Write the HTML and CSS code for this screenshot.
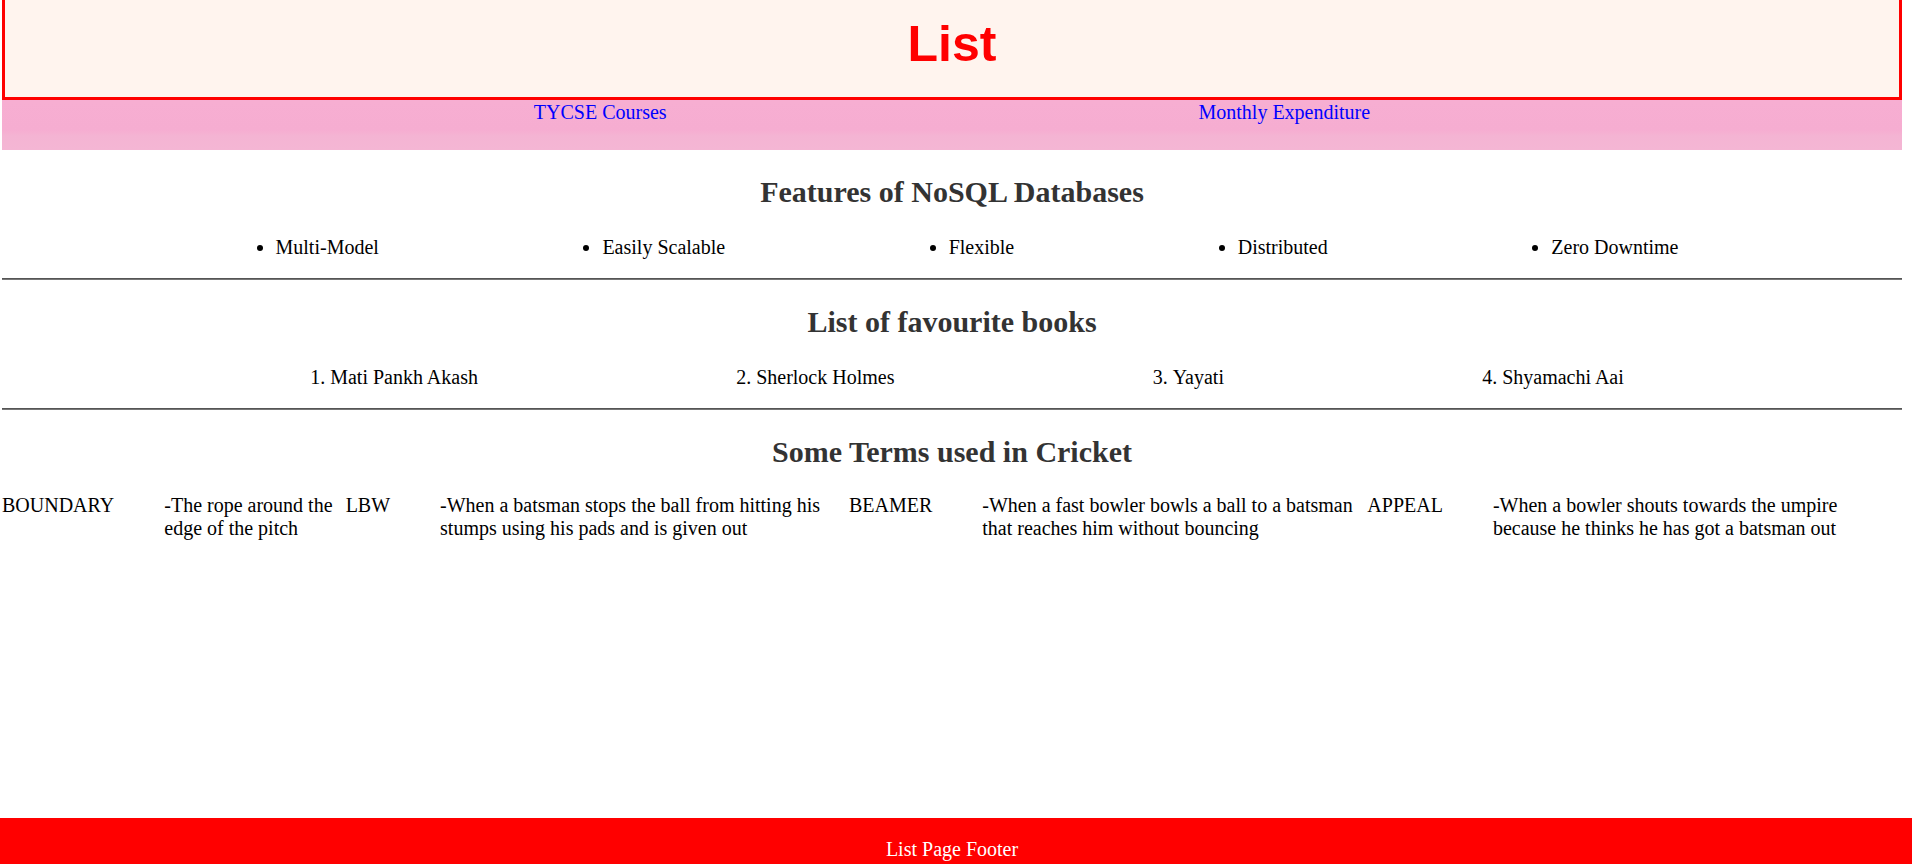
FILE: index.html
```html
<!DOCTYPE html>
<html lang="en">
<head>
<meta charset="utf-8">
<title>List</title>
<link rel="stylesheet" href="styles.css">
</head>
<body>
<div class="page">
  <header class="masthead">
    <h1 class="title">List</h1>
  </header>
  <nav class="topnav">
    <a class="topnav-link" href="#">TYCSE Courses</a>
    <a class="topnav-link" href="#">Monthly Expenditure</a>
  </nav>
  <main class="content">
    <section class="block">
      <h2 class="block-title">Features of NoSQL Databases</h2>
      <ul class="spread-list">
        <li>Multi-Model</li>
        <li>Easily Scalable</li>
        <li>Flexible</li>
        <li>Distributed</li>
        <li>Zero Downtime</li>
      </ul>
    </section>
    <hr class="divider">
    <section class="block">
      <h2 class="block-title">List of favourite books</h2>
      <ol class="spread-list">
        <li>Mati Pankh Akash</li>
        <li>Sherlock Holmes</li>
        <li>Yayati</li>
        <li>Shyamachi Aai</li>
      </ol>
    </section>
    <hr class="divider">
    <section class="block">
      <h2 class="block-title">Some Terms used in Cricket</h2>
      <dl class="terms">
        <dt>BOUNDARY</dt>
        <dd>-The rope around the edge of the pitch</dd>
        <dt>LBW</dt>
        <dd>-When a batsman stops the ball from hitting his stumps using his pads and is given out</dd>
        <dt>BEAMER</dt>
        <dd>-When a fast bowler bowls a ball to a batsman that reaches him without bouncing</dd>
        <dt>APPEAL</dt>
        <dd>-When a bowler shouts towards the umpire because he thinks he has got a batsman out</dd>
      </dl>
    </section>
  </main>
</div>
<footer class="site-footer">List Page Footer</footer>
</body>
</html>
```

FILE: styles.css
```css
html, body {
  margin: 0;
  padding: 0;
  background: #ffffff;
}

body {
  font-family: "Liberation Serif", "Times New Roman", serif;
  font-size: 20px;
  color: #000000;
}

.page {
  margin-left: 2px;
  width: 1900px;
}

.masthead {
  box-sizing: border-box;
  height: 100px;
  background: #fff4ee;
  border: 3px solid #ff0000;
  border-top: 0;
  padding-top: 15px;
  text-align: center;
}

.title {
  margin: 0;
  font-family: "Liberation Sans", Arial, sans-serif;
  font-size: 50px;
  font-weight: bold;
  color: #ff0000;
  line-height: normal;
}

.topnav {
  box-sizing: border-box;
  height: 50px;
  padding-top: 1px;
  display: flex;
  justify-content: space-evenly;
  align-items: flex-start;
  background: linear-gradient(#f7aed2 0%, #f6add1 60%, #f4b4d3 72%, #f4b6d4 100%);
}

.topnav-link {
  color: #0000ff;
  text-decoration: none;
  line-height: 23px;
}

.content {
  display: flow-root;
  min-height: 668px;
  box-sizing: border-box;
}

.block-title {
  margin: 25px 0;
  font-size: 30px;
  font-weight: bold;
  color: #333333;
  text-align: center;
  line-height: normal;
}

.spread-list {
  display: flex;
  justify-content: space-evenly;
  margin: 27px 0 19px;
  padding-left: 50px;
  line-height: 23px;
}

.divider {
  margin: 10px 0;
  height: 0;
  border: 0;
  border-top: 1px solid #555555;
  border-bottom: 1px solid #777777;
}

.terms {
  display: flex;
  margin: 25px 0 20px;
  padding: 0;
}

.terms dt {
  flex: none;
  margin-right: 10px;
}

.terms dd {
  margin: 0 0 0 40px;
  flex: 0 1 auto;
}

.site-footer {
  background: #ff0000;
  color: #ffffff;
  text-align: center;
  padding: 20px 8px 20px 0;
  line-height: 23px;
}
```
